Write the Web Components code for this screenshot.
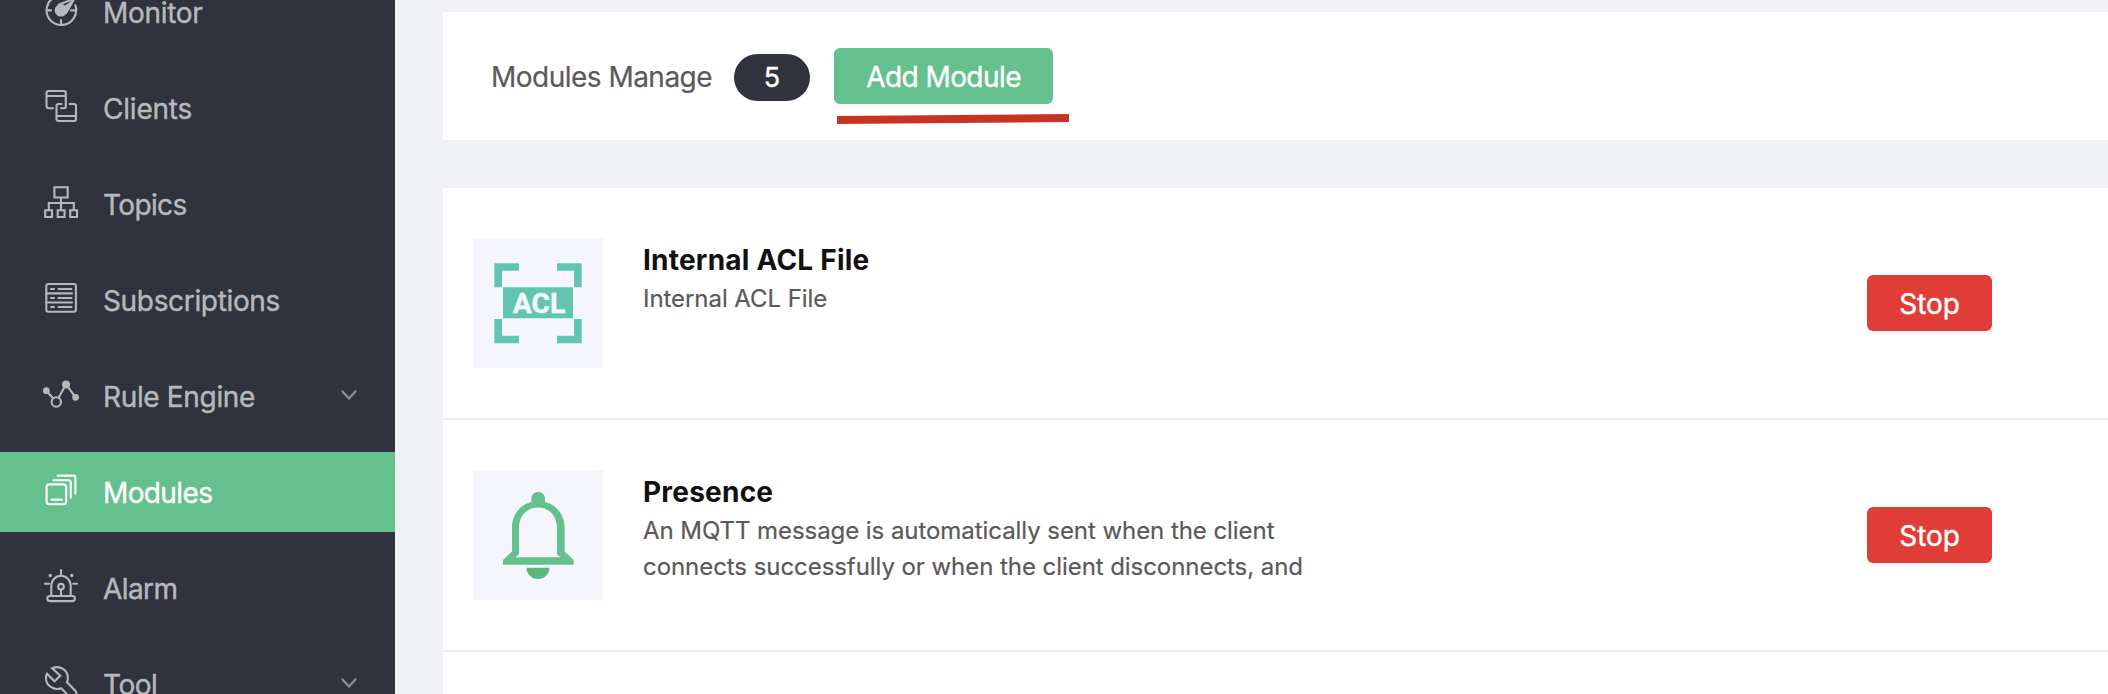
<!DOCTYPE html>
<html lang="en">
<head>
<meta charset="utf-8">
<title>Modules</title>
<style>
html,body{margin:0;height:694px;overflow:hidden}
body{font-family:Inter,"Liberation Sans",sans-serif;background:#f0f1f5}
</style>
</head>
<body>
<app-shell>
  <side-nav slot="nav">
    <nav-item icon="monitor" top="-28" style="--ls:-.3px">Monitor</nav-item>
    <nav-item icon="clients" top="68" style="--ls:-.21px">Clients</nav-item>
    <nav-item icon="topics" top="164" style="--ls:-.62px">Topics</nav-item>
    <nav-item icon="subscriptions" top="260" style="--ls:-.34px">Subscriptions</nav-item>
    <nav-item icon="rules" top="356" style="--ls:-.34px" expandable>Rule Engine</nav-item>
    <nav-item icon="modules" top="452" style="--ls:-.62px" active>Modules</nav-item>
    <nav-item icon="alarm" top="548" style="--ls:-.6px">Alarm</nav-item>
    <nav-item icon="tool" top="644" style="--ls:-.49px" expandable>Tool</nav-item>
  </side-nav>
  <page-header count="5">Modules Manage<action-button slot="action" marked>Add Module</action-button></page-header>
  <module-list>
    <module-row icon="acl" name="Internal ACL File">Internal ACL File</module-row>
    <module-row icon="bell" name="Presence">An MQTT message is automatically sent when the client connects successfully or when the client disconnects, and</module-row>
  </module-list>
</app-shell>
<script>
const define = (name, render) => customElements.define(name, class extends HTMLElement {
  constructor() { super(); this.attachShadow({ mode: 'open' }); }
  connectedCallback() { this.shadowRoot.innerHTML = render(this); }
});

/* Navigation glyphs share one vertical canvas with their rows. */
const navIcons = {
  monitor: `<path d="M75.3 5.2A14.8 14.8 0 1 1 67.5-3.3M47 10.4h4M71 10.4h4M61 20v4.5"/><circle cx="61" cy="10.2" r="6.3" fill="currentColor" stroke="none"/><path d="M59 4.5L74.5-1.5L66.500 12.500" stroke-width="2"/><path d="M66.800 12.200L74-1L65 5.500z" fill="currentColor" stroke="none"/>`,
  clients: `<path d="M53 108.200H48.500a2 2 0 0 1-2-2V93a2 2 0 0 1 2-2H63.800a2 2 0 0 1 2 2V106.200a2 2 0 0 1-2 2H61M46.500 96H65.800M61.500 104H58.500a2 2 0 0 0-2 2V119a2 2 0 0 0 2 2H74a2 2 0 0 0 2-2V106a2 2 0 0 0-2-2H69.500M56.500 116H76"/>`,
  topics: `<path d="M54.400 187.300h13.300v10.200h-13.300zM61 197.500V210M48.800 210V203H73.800V210M45.200 210.200h6.800v6.800h-6.800zM57.700 210.200h6.800v6.800h-6.800zM70.200 210.200h6.800v6.800h-6.800z"/>`,
  subscriptions: `<rect x="46.300" y="284" width="29.600" height="27.700" rx="2"/><path d="M46.300 293.400H72M46.300 302.500H72M51 289h3M58.500 289H71.500M51 298h3M58.500 298H71.500M51 307h3M58.500 307H71.500"/>`,
  rules: `<path d="M46.300 390.700L53 398.200M58.800 397.600L66 384.300L75.600 397.300"/><circle cx="56.300" cy="402" r="4.700"/><g fill="currentColor" stroke="none"><circle cx="46.300" cy="390.700" r="3.400"/><circle cx="66" cy="384.400" r="4"/><circle cx="75.600" cy="397.300" r="3.400"/></g>`,
  modules: `<rect x="46.600" y="484.400" width="19.600" height="19.800" rx="2.800"/><path d="M51.300 499.600H62M53.300 480.300H68.700a2 2 0 0 1 2 2V497.700M57.600 475.600H73.400a2 2 0 0 1 2 2V493.500"/>`,
  alarm: `<rect x="47.300" y="596" width="27.600" height="5.100" rx="2.500"/><path d="M51.300 596V585.500a9.700 9.700 0 0 1 19.400 0V596M61 590V596M61 570V575M45 583.800H49M73.200 583.800H77"/><circle cx="61" cy="586.700" r="2.800"/><g fill="currentColor" stroke="none"><circle cx="50.300" cy="575.500" r="1.700"/><circle cx="71.700" cy="575.500" r="1.700"/></g>`,
  tool: `<path d="M72.500 700L61.200 688.200C53.500 691 46 685.500 46 678.200Q46 675.500 47 673.700L54.500 681.300L60.300 675.800L52.200 668.300C60 664.800 68 670 67.800 678Q67.800 680.500 67 682.300L75.500 691Q77.500 693.500 75.500 697"/>`
};

define('app-shell', () => `<style>
  :host{display:grid;grid-template-columns:395px 1fr;height:694px;overflow:hidden}
  main{padding:12px 0 0 48px;display:flex;flex-direction:column;gap:48px;min-width:0}
  </style><slot name="nav"></slot><main><slot></slot></main>`);

define('side-nav', () => `<style>
  :host{display:block;box-sizing:border-box;background:#30323d;color:#b7b8bb;height:694px;overflow:hidden}
  nav{display:flex;flex-direction:column;gap:16px;margin-top:-28px}
  </style><nav><slot></slot></nav>`);

define('nav-item', el => `<style>
  :host{display:flex;align-items:center;height:80px;padding-left:40px;font-size:28px;line-height:34px;letter-spacing:var(--ls,0);-webkit-text-stroke:.4px currentColor}
  :host([active]){background:#64c08d;color:#fff}
  svg{flex:none;fill:none;stroke:currentColor;stroke-width:2.1;stroke-linecap:round}
  .icon{margin-right:19px}
  .label{flex:1;padding-top:2px}
  .arrow{margin-right:36px;opacity:.65;stroke-width:2.4}
  </style>
  <svg class="icon" width="44" height="80" viewBox="40 ${el.getAttribute('top')} 44 80">${navIcons[el.getAttribute('icon')]}</svg>
  <span class="label"><slot></slot></span>
  ${el.hasAttribute('expandable') ? '<svg class="arrow" width="20" height="20" viewBox="0 0 20 20"><path d="M3.500 5.500L10 12.500L16.500 5.500"/></svg>' : ''}`);

define('page-header', el => `<style>
  :host{display:flex;align-items:center;height:128px;box-sizing:border-box;padding-left:48px;background:#fff;color:#5a5a5a;font-size:28px;line-height:34px}
  .title{padding-top:2px;letter-spacing:-.52px;-webkit-text-stroke:.2px currentColor}
  .count{width:76px;height:47px;box-sizing:border-box;border-radius:24px;background:#30323d;color:#fff;font-size:27px;display:flex;align-items:center;justify-content:center;margin:3px 24px 0 22px;-webkit-text-stroke:.4px currentColor}
  </style><span class="title"><slot></slot></span><span class="count">${el.getAttribute('count')}</span><slot name="action"></slot>`);

define('action-button', el => `<style>
  :host{display:inline-flex;position:relative;align-items:center;justify-content:center;box-sizing:border-box;width:219px;height:56px;border-radius:6px;background:#64c08d;color:#fff;font-size:28px;line-height:34px;letter-spacing:-.56px;-webkit-text-stroke:.4px currentColor;box-shadow:0 4px 0 rgba(0,0,0,.02)}
  :host([danger]){width:125px;background:#e13d38;letter-spacing:-.1px}
  span{padding-top:1px}
  svg{position:absolute;left:2px;top:64px}
  </style><span><slot></slot></span>${el.hasAttribute('marked') ? '<svg width="236" height="14" viewBox="0 0 236 14"><path d="M1 4L233 2V10L1 12z" fill="#c93322"/></svg>' : ''}`);

define('module-list', () => `<style>:host{display:block;background:#fff;height:520px}</style><slot></slot>`);

define('module-icon', el => `<style>
  :host{display:block;width:130px;height:130px;background:#f5f6fb}
  svg{display:block}
  text{font:700 28.5px Roboto,sans-serif;fill:#f5f6fb;stroke:#f5f6fb;stroke-width:.5px}
  </style>` + (el.getAttribute('kind') === 'acl'
  ? `<svg width="130" height="130" viewBox="473 238 130 130" fill="#62c5b2"><path d="M494.300 263.300H519V270.700H502V287.300H494.300zM557 263.300H581.700V287.300H574V270.700H557zM494.300 319H502V335.800H519V343.300H494.300zM574 319H581.700V343.300H557V335.800H574zM503 287.200H573V318.300H503z"/><text x="512.700" y="313" textLength="52.500" lengthAdjust="spacingAndGlyphs">ACL</text></svg>`
  : `<svg width="130" height="130" viewBox="473 470 130 130"><path fill="#64c08d" fill-rule="evenodd" d="M531.300 502V498.700a6.850 6.850 0 0 1 13.700 0V502C557 505 564.600 515 564.600 528V551.500L573.700 560V564.800H503V560L512 551.500V528C512 515 519.500 505 531.300 502zM538 507.600C526.500 507.600 519 516 519 528V554.300L515.600 557.300H560.400L557 554.300V528C557 516 549.500 507.600 538 507.600z"/><path fill="#5bb680" d="M526.500 567.800H549.500a11.500 11.300 0 0 1-23 0z"/></svg>`));

define('module-row', el => `<style>
  :host{display:flex;box-sizing:border-box;height:232px;padding:50px 116px 0 30px;border-bottom:2px solid #e9e9ea}
  .text{margin-left:40px;width:680px;padding-top:4px}
  h3{margin:0;font-size:28px;line-height:36px;font-weight:700;letter-spacing:.22px;color:#111}
  p{margin:3px 0 0;font-size:24px;line-height:36px;letter-spacing:-.06px;color:#595959;-webkit-text-stroke:.2px currentColor}
  action-button{margin:37px 0 0 auto}
  </style><module-icon kind="${el.getAttribute('icon')}"></module-icon>
  <div class="text"><h3>${el.getAttribute('name')}</h3><p><slot></slot></p></div>
  <action-button danger>Stop</action-button>`);
</script>
</body>
</html>
